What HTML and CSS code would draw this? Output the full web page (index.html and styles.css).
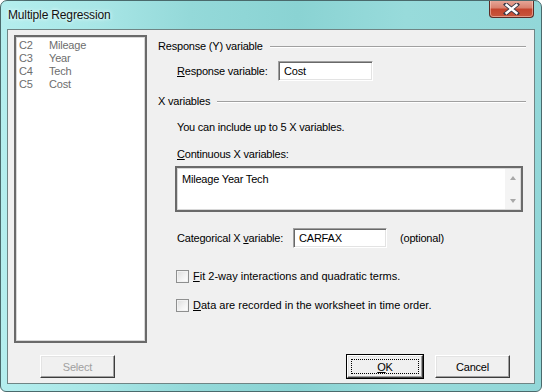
FILE: index.html
```html
<!DOCTYPE html>
<html lang="en">
<head>
    <meta charset="UTF-8">
    <title>Multiple Regression</title>
    <link rel="stylesheet" href="styles.css">
</head>
<body>
    <div class="window">
        <!-- Title bar -->
        <div class="titlebar">
            <div class="title">Multiple Regression</div>
            <div class="close">
                <svg width="17" height="12" viewBox="0 0 17 12">
                    <path d="M3 1.5 L14 10.5 M14 1.5 L3 10.5" stroke="#3a3a48" stroke-width="4.2" stroke-linecap="square"/>
                    <path d="M3.5 2 L13.5 10 M13.5 2 L3.5 10" stroke="#ffffff" stroke-width="2.4" stroke-linecap="square"/>
                </svg>
            </div>
        </div>

        <!-- Dialog body -->
        <div class="client">
            <div class="main">
                <div class="listbox">
                    <div class="list-row"><span class="col">C2</span><span>Mileage</span></div>
                    <div class="list-row"><span class="col">C3</span><span>Year</span></div>
                    <div class="list-row"><span class="col">C4</span><span>Tech</span></div>
                    <div class="list-row"><span class="col">C5</span><span>Cost</span></div>
                </div>

                <div class="panel">
                    <div class="group group-first">
                        <span>Response (Y) variable</span>
                        <div class="rule"></div>
                    </div>
                    <div class="field-row resp-row">
                        <label class="resp-label"><u>R</u>esponse variable:</label>
                        <div class="textbox resp-box">Cost</div>
                    </div>

                    <div class="group group-second">
                        <span>X variables</span>
                        <div class="rule"></div>
                    </div>
                    <div class="note">You can include up to 5 X variables.</div>
                    <div class="note cont-label"><u>C</u>ontinuous X variables:</div>
                    <div class="memo">
                        <div class="memo-text">Mileage Year Tech</div>
                        <div class="scrollbar">
                            <span class="arrow up"></span>
                            <span class="arrow down"></span>
                        </div>
                    </div>
                    <div class="field-row cat-row">
                        <label class="cat-label">Categorical X <u>v</u>ariable:</label>
                        <div class="textbox cat-box">CARFAX</div>
                        <span class="optional">(optional)</span>
                    </div>

                    <div class="check-row check-first">
                        <span class="checkbox"></span>
                        <span><u>F</u>it 2-way interactions and quadratic terms.</span>
                    </div>
                    <div class="check-row check-second">
                        <span class="checkbox"></span>
                        <span><u>D</u>ata are recorded in the worksheet in time order.</span>
                    </div>
                </div>
            </div>

            <div class="buttons">
                <button class="btn btn-disabled">Select</button>
                <button class="btn btn-default"><span class="focus"><u>O</u>K</span></button>
                <button class="btn">Cancel</button>
            </div>
        </div>
    </div>
</body>
</html>
```

FILE: styles.css
```css
body {
    margin: 0;
    padding: 0;
    background: #ffffff;
    font-family: "Liberation Sans", Arial, sans-serif;
}
.window {
    width: 542px;
    height: 392px;
    box-sizing: border-box;
    border: 1px solid #4a6a6c;
    border-radius: 7px 7px 6px 6px;
    background: linear-gradient(to right, #b4eeee 0%, #a8e6e6 18%, #94d9d9 35%, #8ad3d3 55%, #98dbdb 75%, #92d7d8 100%);
    display: flex;
    flex-direction: column;
    overflow: hidden;
}
.titlebar {
    height: 28px;
    display: flex;
    justify-content: space-between;
    align-items: flex-start;
}
.title {
    padding: 7px 0 0 7px;
    font-size: 12px;
    line-height: 14px;
    letter-spacing: -0.15px;
    color: #111111;
    text-shadow: 0 0 5px #e6fbfb, 0 0 3px #e6fbfb;
}
.close {
    width: 45px;
    height: 18px;
    margin: -1px 7px 0 0;
    box-sizing: border-box;
    border: 1px solid #5b2c26;
    border-top: none;
    border-radius: 0 0 4px 4px;
    background: linear-gradient(to bottom, #e8aa9c 0%, #d9826f 45%, #c4452e 55%, #c8563c 100%);
    box-shadow: inset 0 0 0 1px rgba(255, 220, 210, 0.5);
    display: flex;
    justify-content: center;
    align-items: center;
}
.client {
    height: 355px;
    margin: 0 6px;
    box-sizing: border-box;
    border: 1px solid #6f8585;
    background: #f0f0f0;
    padding: 5px 0 0 6px;
    display: flex;
    flex-direction: column;
    font-size: 11px;
    letter-spacing: -0.2px;
    color: #000000;
}
.main {
    display: flex;
    gap: 11px;
}
.listbox {
    width: 133px;
    height: 308px;
    box-sizing: border-box;
    border: 2px solid #6a6a6a;
    box-shadow: inset 0 0 0 1px #d8d8d8;
    background: #ffffff;
    padding: 2px 0 0 3px;
    color: #6d6d6d;
}
.list-row {
    display: flex;
    line-height: 13px;
}
.list-row .col {
    width: 30px;
}
.panel {
    width: 368px;
    display: flex;
    flex-direction: column;
}
.group {
    display: flex;
    align-items: center;
    gap: 7px;
    height: 14px;
    line-height: 14px;
}
.group-first {
    margin-top: 4px;
}
.group-second {
    margin-top: 13px;
}
.rule {
    flex: 1;
    border-top: 1px solid #a0a0a0;
    border-bottom: 1px solid #ffffff;
    margin-top: 1px;
}
.field-row {
    display: flex;
    align-items: center;
    height: 20px;
    margin-left: 19px;
}
.resp-row {
    margin-top: 8px;
}
.resp-label {
    width: 101px;
}
.textbox {
    height: 20px;
    box-sizing: border-box;
    background: #ffffff;
    border-top: 1px solid #a0a0a0;
    border-left: 1px solid #a0a0a0;
    border-right: 1px solid #ffffff;
    border-bottom: 1px solid #ffffff;
    box-shadow: inset 1px 1px 0 #696969, inset -1px -1px 0 #e3e3e3;
    padding: 0 0 0 5px;
    line-height: 18px;
}
.resp-box {
    width: 95px;
}
.note {
    margin-left: 19px;
    margin-top: 12px;
    height: 14px;
    line-height: 14px;
}
.cont-label {
    margin-top: 13px;
}
.memo {
    width: 348px;
    height: 46px;
    margin: 5px 0 0 17px;
    box-sizing: border-box;
    border: 2px solid #6a6a6a;
    box-shadow: inset 0 0 0 1px #d8d8d8;
    background: #ffffff;
    display: flex;
}
.memo-text {
    flex: 1;
    padding: 4px 0 0 5px;
    line-height: 14px;
}
.scrollbar {
    width: 15px;
    margin: 1px 1px 1px 0;
    background: #f4f4f4;
    display: flex;
    flex-direction: column;
    justify-content: space-between;
    align-items: center;
    padding: 7px 0 6px;
}
.arrow {
    width: 0;
    height: 0;
    border-left: 3.5px solid transparent;
    border-right: 3.5px solid transparent;
}
.arrow.up {
    border-bottom: 4px solid #a8a8a8;
}
.arrow.down {
    border-top: 4px solid #a8a8a8;
}
.cat-row {
    margin-top: 16px;
}
.cat-label {
    width: 116px;
}
.cat-box {
    width: 94px;
}
.optional {
    margin-left: 13px;
}
.check-row {
    display: flex;
    align-items: center;
    gap: 4px;
    height: 14px;
    margin-left: 18px;
    letter-spacing: 0;
}
.check-first {
    margin-top: 21px;
}
.check-second {
    margin-top: 15px;
}
.checkbox {
    width: 13px;
    height: 13px;
    box-sizing: border-box;
    border: 1px solid #8e8f8f;
    background: linear-gradient(135deg, #dcdcdc 0%, #f4f4f4 60%, #ffffff 100%);
    box-shadow: inset 0 0 0 1px #f2f2f2;
}
.buttons {
    display: flex;
    margin-top: 12px;
    padding: 0 24px 0 26px;
}
.btn {
    width: 75px;
    height: 23px;
    box-sizing: border-box;
    margin: 0;
    padding: 0;
    font-family: "Liberation Sans", Arial, sans-serif;
    font-size: 11px;
    letter-spacing: -0.2px;
    color: #000000;
    background: #f0f0f0;
    border-top: 1px solid #ffffff;
    border-left: 1px solid #ffffff;
    border-right: 1px solid #3c3c3c;
    border-bottom: 1px solid #3c3c3c;
    box-shadow: inset -1px -1px 0 #a0a0a0, inset 1px 1px 0 #e3e3e3;
}
.btn-disabled {
    color: #a0a0a0;
    margin-right: auto;
}
.btn-default {
    width: 76px;
    margin-right: 12px;
    outline: 1px solid #000000;
    display: flex;
    align-items: center;
    justify-content: center;
    padding: 3px;
}
.focus {
    flex: 1;
    align-self: stretch;
    border: 1px dotted #000000;
    display: flex;
    align-items: center;
    justify-content: center;
}
```
